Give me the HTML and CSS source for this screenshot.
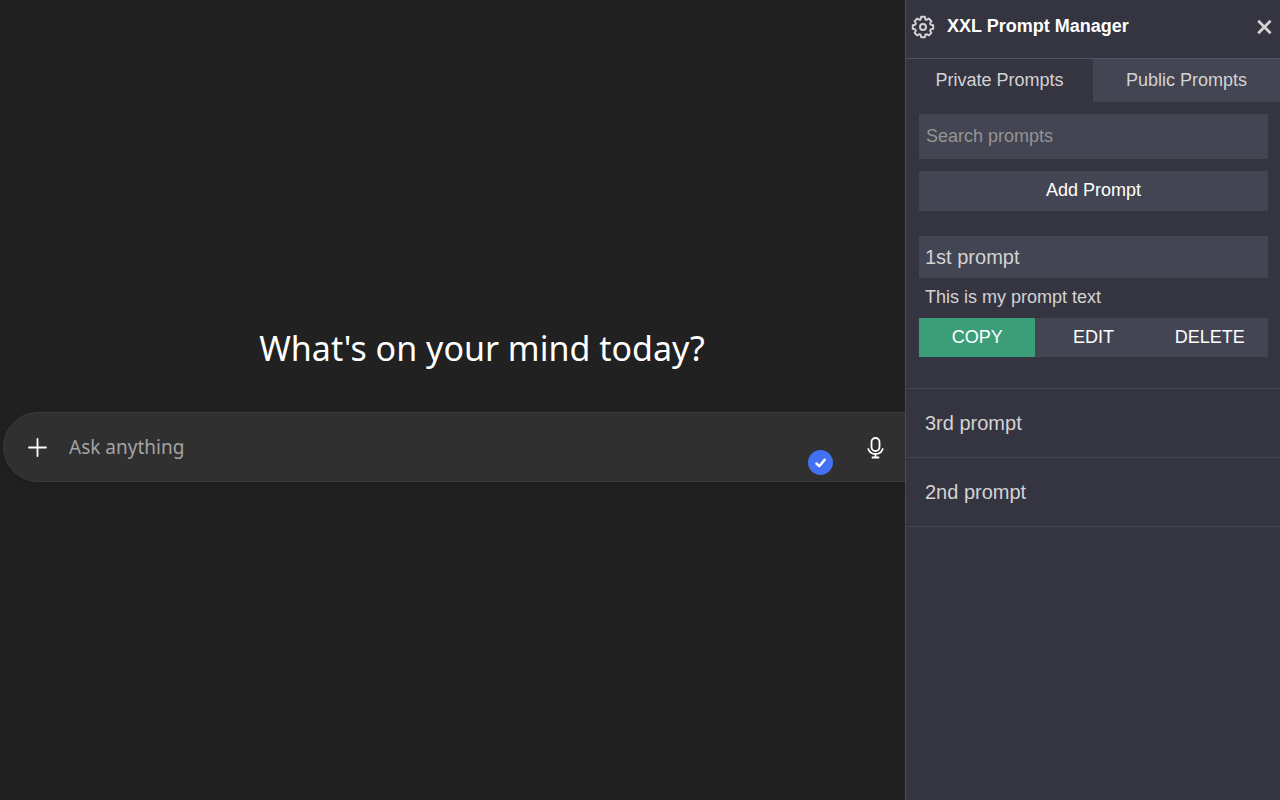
FILE: index.html
```html
<!DOCTYPE html>
<html lang="en">
<head>
    <meta charset="UTF-8">
    <meta name="viewport" content="width=device-width, initial-scale=1.0">
    <title>XXL Prompt Manager</title>
    <link rel="stylesheet" href="styles.css">
</head>
<body>
    <main class="chat">
        <h1 class="chat-title">What's on your mind today?</h1>
        <form class="composer">
            <button type="button" class="icon-button" aria-label="Add files">
                <svg width="20" height="20" viewBox="0 0 20 20"><path d="M9.500 2v17M1 10.500h17"/></svg>
            </button>
            <input class="composer-input" type="text" placeholder="Ask anything" aria-label="Ask anything">
            <button type="button" class="icon-button" aria-label="Dictate">
                <svg width="20" height="24" viewBox="0 0 20 24">
                    <rect x="6.500" y="3" width="8" height="13" rx="4"/>
                    <path d="M3.300 14c1.200 3.300 3.800 5 7.200 5s6-1.700 7.200-5M10.500 19v3.500M7.500 22.500h6"/>
                </svg>
            </button>
            <span class="check-badge">
                <svg width="25" height="25" viewBox="0 0 25 25"><path d="M8.500 13.500l2.800 2.700 5.400-6.500"/></svg>
            </span>
        </form>
    </main>

    <aside class="panel">
        <header class="panel-header">
            <button type="button" class="header-button" aria-label="Settings">
                <svg width="24" height="24" viewBox="0 0 24 24" stroke-width="2">
                    <path d="M10.200 1.800H13.800L14.400 4.300Q15 5 15.900 4.700L17.900 3.600L20.400 6.100L19.300 8.100Q19 9 19.700 9.600L22.200 10.200V13.800L19.700 14.400Q19 15 19.300 15.900L20.400 17.900L17.900 20.400L15.900 19.300Q15 19 14.400 19.700L13.800 22.200H10.200L9.600 19.700Q9 19 8.100 19.300L6.100 20.400L3.600 17.900L4.700 15.900Q5 15 4.300 14.400L1.800 13.800V10.200L4.300 9.600Q5 9 4.700 8.100L3.600 6.100L6.100 3.600L8.100 4.700Q9 5 9.600 4.300Z"/>
                    <circle cx="12" cy="12" r="3"/>
                </svg>
            </button>
            <h2 class="panel-title">XXL Prompt Manager</h2>
            <button type="button" class="header-button" aria-label="Close">
                <svg class="close-icon" width="16" height="16" viewBox="0 0 16 16" stroke-width="2.800"><path d="M2.200 1.800l12.400 12.400M14.600 1.800l-12.400 12.400"/></svg>
            </button>
        </header>

        <nav class="tabs">
            <button type="button" class="tab active">Private Prompts</button>
            <button type="button" class="tab">Public Prompts</button>
        </nav>

        <div class="tools">
            <input class="search" type="text" placeholder="Search prompts" aria-label="Search prompts">
            <button type="button" class="add-button">Add Prompt</button>
        </div>

        <ul class="prompts">
            <li class="prompt open">
                <h3 class="prompt-title">1st prompt</h3>
                <p class="prompt-text">This is my prompt text</p>
                <div class="prompt-actions">
                    <button type="button" class="action copy">COPY</button>
                    <button type="button" class="action">EDIT</button>
                    <button type="button" class="action">DELETE</button>
                </div>
            </li>
            <li class="prompt">
                <h3 class="prompt-title">3rd prompt</h3>
            </li>
            <li class="prompt">
                <h3 class="prompt-title">2nd prompt</h3>
            </li>
        </ul>
    </aside>
</body>
</html>
```
FILE: styles.css
```css
* {
    box-sizing: border-box;
}
body {
    margin: 0;
    display: flex;
    min-height: 100vh;
    background: #212121;
    color: #fff;
    font-family: "Liberation Sans", Arial, sans-serif;
}
button,
input {
    margin: 0;
    border: none;
    padding: 0;
    font-family: inherit;
    color: inherit;
}
button {
    cursor: pointer;
}
svg {
    display: block;
    fill: none;
    stroke: currentColor;
    stroke-linecap: round;
    stroke-linejoin: round;
}

/* Chat area, it runs on under the panel */
.chat {
    flex: 1;
    min-width: 0;
    overflow: hidden;
    display: flex;
    flex-direction: column;
    justify-content: center;
    gap: 42px;
    padding: 8px 0 0 3px;
    font-family: "Noto Sans", "Segoe UI", sans-serif;
}
.chat-title {
    width: calc(100% + 56px);
    margin: 0;
    font-size: 34px;
    line-height: 44px;
    font-weight: 400;
    text-align: center;
    white-space: nowrap;
}
.composer {
    position: relative;
    display: flex;
    align-items: center;
    gap: 19px;
    width: calc(100% + 56px);
    height: 70px;
    padding: 0 73px 0 22px;
    background: #303030;
    border: 1px solid #3b3b3b;
    border-radius: 35px;
    box-shadow: 0 4px 12px rgba(0, 0, 0, 0.15);
}
.composer-input {
    flex: 1;
    min-width: 0;
    background: none;
    font-size: 19px;
    outline: none;
}
.composer-input::placeholder {
    color: #a3a3a3;
    opacity: 1;
}
.icon-button {
    display: flex;
    justify-content: center;
    width: 24px;
    background: none;
}
.icon-button svg {
    stroke-width: 1.8;
}
.check-badge {
    position: absolute;
    left: 804px;
    top: 37px;
    border-radius: 50%;
    background: #4271f4;
}
.check-badge svg {
    stroke-width: 2.5;
}

/* Side panel */
.panel {
    width: 375px;
    flex-shrink: 0;
    background: #353541;
    border-left: 1px solid #4a4a56;
    color: #d3d3d3;
}
.panel-header {
    display: flex;
    align-items: center;
    gap: 12px;
    height: 59px;
    padding: 0 8px 5px 5px;
    border-bottom: 1px solid #4d5468;
}
.header-button {
    background: none;
}
.close-icon {
    stroke-linecap: butt;
}
.panel-title {
    flex: 1;
    margin: 0;
    padding-bottom: 2px;
    font-size: 18px;
    line-height: 24px;
    color: #fff;
}
.tabs {
    display: flex;
}
.tab {
    flex: 1;
    height: 43px;
    background: #444552;
    font-size: 18px;
}
.tab.active {
    background: none;
}
.tools {
    display: flex;
    flex-direction: column;
    gap: 12px;
    padding: 12px 12px 0 13px;
}
.search {
    height: 45px;
    padding: 0 7px;
    background: #444552;
    font-size: 18px;
    outline: none;
}
.search::placeholder {
    color: #949494;
    opacity: 1;
}
.add-button {
    height: 40px;
    padding-bottom: 2px;
    background: #444552;
    font-size: 18px;
    color: #fff;
}
.prompts {
    list-style: none;
    margin: 0;
    padding: 12px 0 0;
}
.prompt {
    padding: 13px 12px 13px 13px;
    border-bottom: 1px solid #454552;
}
.prompt.open {
    padding-bottom: 31px;
}
.prompt-title {
    margin: 0;
    padding: 0 6px;
    font-size: 20px;
    line-height: 42px;
    font-weight: 400;
}
.open .prompt-title {
    background: #444552;
}
.prompt-text {
    margin: 0;
    padding: 7px 6px 9px;
    font-size: 18px;
    line-height: 24px;
}
.prompt-actions {
    display: flex;
}
.action {
    flex: 1;
    height: 39px;
    background: #444552;
    font-size: 18px;
    color: #fff;
}
.action.copy {
    background: #3b9e78;
}
```
